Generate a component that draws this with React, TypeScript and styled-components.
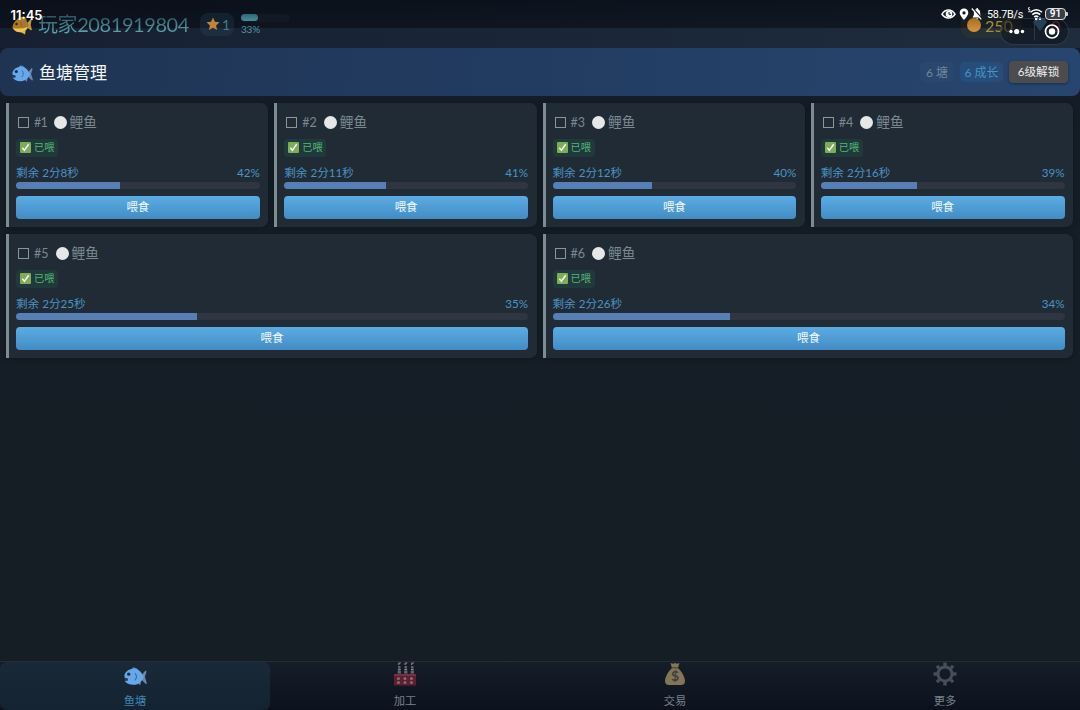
import React from "react";
import styled, { createGlobalStyle } from "styled-components";

const GlobalStyle = createGlobalStyle`
  * { box-sizing: border-box; }
  body {
    margin: 0;
    background: #151d26;
    font-family: Lato, "Noto Sans CJK SC", sans-serif;
    overflow: hidden;
  }
`;

const Screen = styled.div`
  width: 1080px;
  height: 710px;
  display: flex;
  flex-direction: column;
  position: relative;
  overflow: hidden;
  background: linear-gradient(180deg, #141c28 0, #151d26 230px, #151d25 650px);
`;

const TopBar = styled.header`
  height: 48px;
  flex: none;
  display: flex;
  align-items: flex-start;
  padding-left: 12px;
  background: linear-gradient(90deg, #162031 0%, #1e2c3c 100%);
`;

const StatusShade = styled.div`
  position: absolute;
  inset: 0 0 auto 0;
  height: 28px;
  background: linear-gradient(180deg, rgba(5, 8, 15, 0.68), rgba(5, 8, 15, 0.52));
`;

const PlayerRow = styled.div`
  position: relative;
  display: flex;
  align-items: center;
  height: 48px;
`;

const PlayerIcon = styled.div`
  display: flex;
  width: 22px;
  margin: 1px 4px 0 0;
`;

const PlayerName = styled.div`
  width: 152px;
  font-size: 20px;
  line-height: 28px;
  letter-spacing: -0.42px;
  white-space: nowrap;
  background: linear-gradient(180deg, #2b5660 20%, #5fabb5 85%);
  background-clip: text;
  color: transparent;
`;

const LevelPill = styled.div`
  display: flex;
  align-items: center;
  gap: 2px;
  width: 34px;
  height: 23px;
  margin-left: 10px;
  padding-left: 6px;
  border-radius: 8px;
  background: rgba(65, 135, 155, 0.13);
  color: #427d89;
  font-size: 14px;
`;

const Experience = styled.div`
  display: flex;
  flex-direction: column;
  gap: 2px;
  width: 49px;
  height: 23px;
  margin: 2px 0 0 7px;
  color: #5796a1;
  font-size: 10px;
  line-height: 11px;
  letter-spacing: -0.2px;
`;

const ExperienceTrack = styled.div`
  height: 8px;
  border-radius: 4px;
  background: rgba(120, 130, 150, 0.05);
  flex: none;
`;

const ExperienceFill = styled.div`
  width: 17px;
  height: 7px;
  border-radius: 4px;
  background: linear-gradient(180deg, #2c6a76, #468d99);
`;

const Coins = styled.div`
  position: absolute;
  left: 961px;
  top: 13px;
  width: 61px;
  height: 25px;
  display: flex;
  align-items: center;
  gap: 4px;
  padding-left: 6px;
  border-radius: 9px;
  background: rgba(160, 130, 20, 0.07);
  color: #a48e3b;
  font-size: 16px;
  line-height: 18px;
`;

const CoinDot = styled.span`
  width: 14px;
  height: 14px;
  margin-top: -2px;
  border-radius: 50%;
  background: linear-gradient(180deg, #a76e25, #d69638);
`;

const Gem = styled.div`
  position: absolute;
  left: 1033px;
  top: 17px;
  display: flex;
  gap: 4px;
  color: #8c3e48;
  font-size: 16px;
  line-height: 17px;
`;

const Clock = styled.div`
  position: absolute;
  left: 10.5px;
  top: 6.5px;
  color: #fff;
  font: 600 13px/16px Inter, sans-serif;
`;

const SystemIcons = styled.div`
  position: absolute;
  left: 941px;
  top: 6px;
  width: 130px;
  height: 16px;
  display: flex;
  align-items: center;
  color: #fff;
`;

const Speed = styled.span`
  width: 40px;
  margin: 1px 0 0 2px;
  font: 10.8px/16px Roboto, sans-serif;
  letter-spacing: -0.25px;
  white-space: nowrap;
`;

const Battery = styled.span`
  display: flex;
  align-items: center;
  justify-content: center;
  width: 21px;
  height: 12px;
  margin-left: 1px;
  border: 1px solid #ddd;
  border-radius: 4px;
  background: #3a3e46;
  font: 600 10px/10px Roboto, sans-serif;
`;

const BatteryTip = styled.span`
  width: 2px;
  height: 4px;
  background: #ccc;
  border-radius: 0 1px 1px 0;
`;

const Capsule = styled.div`
  position: absolute;
  left: 1000px;
  top: 18px;
  width: 69px;
  height: 27px;
  display: flex;
  align-items: center;
  border: 1px solid rgba(110, 120, 135, 0.3);
  border-radius: 14px;
  background: rgba(12, 18, 27, 0.55);
`;

const PondHeader = styled.section`
  height: 48px;
  flex: none;
  display: flex;
  align-items: center;
  padding: 0 12px;
  border-radius: 8px;
  background: linear-gradient(100deg, #1f3453 0%, #223b60 45%, #27466f 100%);
`;

const PondIcon = styled.span`
  display: flex;
  margin-top: 4px;
`;

const PondTitle = styled.h1`
  flex: 1;
  margin: 1px 0 0 6px;
  color: #f4f6f9;
  font-size: 17px;
  font-weight: 400;
  line-height: 24px;
`;

const HeaderTags = styled.div`
  display: flex;
  gap: 6px;
`;

const Tag = styled.span<{ $width: number; $tone: string; $fill: string }>`
  width: ${(p) => p.$width}px;
  height: 20px;
  display: flex;
  align-items: center;
  justify-content: center;
  border-radius: 5px;
  background: ${(p) => p.$fill};
  color: ${(p) => p.$tone};
  font-size: 12px;
  white-space: nowrap;
`;

const UnlockButton = styled.button`
  width: 59px;
  height: 22px;
  margin: -1px 0 0 0;
  padding: 0;
  border: 0;
  border-radius: 4px;
  background: #4c4c4f;
  box-shadow: 0 1px 3px rgba(0, 0, 0, 0.35);
  color: #eee;
  font: 11.6px/21px Lato, "Noto Sans CJK SC", sans-serif;
  white-space: nowrap;
`;

const PondList = styled.main`
  flex: 1;
  display: flex;
  flex-wrap: wrap;
  align-content: flex-start;
  gap: 7.5px 6px;
  padding: 7px 7px 0 6px;
`;

const Card = styled.article<{ $wide: boolean }>`
  width: ${(p) => (p.$wide ? 530.5 : 262.25)}px;
  height: 123.5px;
  padding: 9px 8.5px 0 7px;
  border-left: 3px solid #7c8c90;
  border-radius: 0 7px 7px 0;
  background: #202b36;
  box-shadow: 0 1px 5px rgba(5, 12, 20, 0.35);
`;

const CardTitle = styled.div`
  display: flex;
  align-items: center;
  height: 20px;
  padding-left: 2px;
  color: #7b8890;
`;

const CheckBox = styled.span`
  width: 11px;
  height: 11px;
  border: 1px solid #8c9599;
`;

const PondNumber = styled.span<{ $narrow: boolean }>`
  width: ${(p) => (p.$narrow ? 13 : 15)}px;
  margin-left: 5px;
  font-size: 12.5px;
  letter-spacing: ${(p) => (p.$narrow ? -0.8 : 0)}px;
  white-space: nowrap;
`;

const FishDot = styled.span`
  width: 13px;
  height: 13px;
  margin: 0 3px 0 6.5px;
  border-radius: 50%;
  background: #e6e7e9;
`;

const FishName = styled.span`
  font-size: 13.7px;
  line-height: 20px;
`;

const FedBadge = styled.div`
  display: flex;
  align-items: center;
  gap: 3px;
  width: 42px;
  height: 18px;
  margin-top: 6.6px;
  padding: 0 0 1px 4px;
  border-radius: 4px;
  background: #20393b;
  color: #55b574;
  font-size: 10.2px;
  line-height: 16px;
  white-space: nowrap;
`;

const TimeRow = styled.div`
  display: flex;
  justify-content: space-between;
  height: 17px;
  margin-top: 7px;
  color: #4c93c3;
  font-size: 11.6px;
  line-height: 17px;
`;

const Track = styled.div`
  height: 7px;
  margin-top: 1.4px;
  border-radius: 4px;
  background: #2f3541;
  overflow: hidden;
`;

const Fill = styled.div`
  height: 100%;
  background: #557fb5;
`;

const FeedButton = styled.button`
  display: block;
  width: 100%;
  height: 23.5px;
  margin-top: 6.6px;
  padding: 0;
  border: 0;
  border-radius: 4px;
  background: linear-gradient(180deg, #5bace3, #438cc4);
  color: #f3f9fe;
  font: 11.5px/22px Lato, "Noto Sans CJK SC", sans-serif;
`;

const TabBar = styled.nav`
  height: 49.5px;
  flex: none;
  display: flex;
  border-top: 1px solid #232d39;
  background: linear-gradient(180deg, #151d29, #0c121d);
`;

const Tab = styled.div<{ $active?: boolean }>`
  flex: 1;
  display: flex;
  flex-direction: column;
  align-items: center;
  gap: 5px;
  border-radius: 7px;
  background: ${(p) => (p.$active ? "linear-gradient(180deg, #1a2938, #142331)" : "none")};
  color: ${(p) => (p.$active ? "#3f86b3" : "#77828a")};
  font-size: 11.3px;
  line-height: 19px;
`;

const TabIcon = styled.span<{ $drop?: number }>`
  display: flex;
  align-items: center;
  justify-content: center;
  height: 25px;
  padding-top: ${(p) => p.$drop ?? 0}px;
`;

const BlueFish = ({ width = 21 }: { width?: number }) => (
  <svg width={width} height={width * 0.82} viewBox="0 0 22 18">
    <path d="M6 4 8.500 .5q4-.5 6 4Z" fill="#5288c8" />
    <path d="M12 14.500 15.500 17.500 16.500 13Z" fill="#5288c8" />
    <path d="m16.500 8 3.800-4.500q1.300-.2 1.200 1L20 9.500l1.900 6q-.3 1-1.300.5L16.500 12Z" fill="#6788ad" />
    <path d="M.4 8C1.500 3.800 5.500 1.500 9.800 1.700c4.500.2 7.200 3.800 9.200 7.800-1.800 4.200-4.700 7.300-9.700 7.500C5.500 17.100 2 15.600.6 13.200l3-.2-.4-1.600-2.500-.9Z" fill="#67a9e8" />
    <path d="M10.500 5.800c1.900 2.200 1.600 5-.2 7" fill="none" stroke="#326ca9" strokeWidth="1" />
    <circle cx="4.500" cy="6.800" r="1.600" fill="#182d48" />
    <path d="m.7 10.300 3 .7.1 1.800-3 .2" fill="#263e60" />
  </svg>
);

const GoldFish = () => (
  <svg width="22" height="20" viewBox="0 0 22 20">
    <path d="M5 5Q7 1 13 2L15 6Z" fill="#a77b2a" />
    <path d="m7 16 6 3.500.7-4Z" fill="#e3b449" />
    <path d="m14.500 9 3.700-4.500q1.500-.3 1.300 1l-.8 4.500 1.200 4.500q-.2 1.200-1.500.5L14.500 12Z" fill="#c89435" />
    <path d="M.7 11C2 6 5.500 3.400 10 3.800c3.500.3 6 3.200 6.600 6.500-.8 4.200-4 7-8.300 7-3.200 0-5.600-1.300-7-3.600l-1-.6Z" fill="#a97929" />
    <path d="M1 13q7.500 1.500 15-1c-2 5.500-10.500 7.500-14.500 2Z" fill="#f0c356" />
    <path d="M8.500 7q2 2 .6 4.500" fill="none" stroke="#835c25" strokeWidth=".8" />
    <circle cx="4.500" cy="9" r="1.200" fill="#302416" />
  </svg>
);

const CheckMark = () => (
  <svg width="11" height="11" viewBox="0 0 11 11">
    <rect width="11" height="11" rx="1" fill="#7fac59" />
    <path d="m2.300 5.800 2.100 2.400 4.300-6" fill="none" stroke="#f5faf1" strokeWidth="1.500" />
  </svg>
);

const Factory = () => (
  <svg width="22" height="24" viewBox="0 0 22 24">
    {[0, 1, 2].map((i) => (
      <g key={i} transform={`translate(${4 + i * 6.5} 0)`}>
        <path d="M-.5 12 .3 4h2l.8 8Z" fill="#42474f" />
        <path d="M.2 5h2.200M0 7.500h2.600M-.2 10h3" stroke="#838990" />
        <path d="M.7 3V1.500L2.700.7" fill="none" stroke="#74787e" strokeWidth="1.400" />
      </g>
    ))}
    <rect x="0" y="12" width="22" height="11.500" rx="1" fill="#611f2e" />
    <path d="M0 13h22" stroke="#874653" />
    {[3.2, 9.7, 16.2].map((x) => (
      <g key={x} fill="#818087">
        <rect x={x} y="15.500" width="2.500" height="2.200" />
        <rect x={x} y="19.500" width="2.500" height="2.200" />
      </g>
    ))}
  </svg>
);

const MoneyBag = () => (
  <svg width="22" height="24" viewBox="0 0 22 24">
    <path d="M6.500 1 9 1.800l2-.8 2 .8 2.500-.8-1.600 5.200C17 8 21 15 21 19q0 4-4 4H5q-4 0-4-4C1 15 5 8 8 6.200Z" fill="#817756" />
    <path d="M7.500 5.800h7" stroke="#53472f" strokeWidth="1.300" />
    <text x="11" y="19.200" textAnchor="middle" fontFamily="Lato" fontSize="14" fontWeight="700" fill="#3a4044">$</text>
  </svg>
);

const Gear = () => (
  <svg width="24" height="24" viewBox="0 0 24 24" fill="none" stroke="#454e59">
    <circle cx="12" cy="12" r="7" strokeWidth="3" />
    {[0, 45, 90, 135, 180, 225, 270, 315].map((angle) => (
      <path key={angle} d="M12 .5V4" strokeWidth="3.400" transform={`rotate(${angle} 12 12)`} />
    ))}
  </svg>
);

const StatusGlyphs = () => (
  <svg width="44" height="16" viewBox="0 0 44 16">
    <path d="M1 8.200c3.500-5.500 9.500-5.500 13 0-3.500 5-9.500 5-13 0Z" fill="none" stroke="#fff" strokeWidth="1.500" />
    <circle cx="8" cy="8" r="3.300" fill="#fff" />
    <path d="M8 6v2.300h2" fill="none" stroke="#111722" />
    <path d="M23 2.500c-2.600 0-4.300 1.800-4.300 4.200 0 2.900 4.300 7.200 4.300 7.200s4.300-4.300 4.300-7.200c0-2.400-1.700-4.200-4.300-4.200Zm0 2.800a1.600 1.600 0 1 1 0 3.200 1.600 1.600 0 0 1 0-3.200Z" fill="#fff" />
    <path d="M31.500 11.500h9L39.200 9V6.500c0-2-1.200-3-2.200-3.300V2h-1.500v1c-1.700.5-2.600 2-2.600 3.500V9ZM35 12.300h2.500l-1.200 1Z" fill="#fff" />
    <path d="m32 2.500 9.500 10.500" stroke="#10151e" strokeWidth="1.300" />
    <path d="m30.800 2.500 9.500 10.800" stroke="#fff" strokeWidth="1.200" />
  </svg>
);

const Wifi = () => (
  <svg width="17" height="14" viewBox="0 0 17 14" fill="none" stroke="#fff" strokeWidth="1.500">
    <path d="M3.500 5.300c3.500-3 8-3 11.500 0M5.300 7.600c2.300-2 5.600-2 7.900 0M7.200 10q2-1.700 4.100 0" />
    <circle cx="9.200" cy="12" r=".5" fill="#fff" />
    <path d="M3 .7H1.500v2h1.400v2H1M13 10v3m-1-1 1 1 1-1" strokeWidth=".8" />
  </svg>
);

const ponds = [
  { id: 1, time: "2分8秒", percent: 42, progress: 42.7 },
  { id: 2, time: "2分11秒", percent: 41, progress: 41.7 },
  { id: 3, time: "2分12秒", percent: 40, progress: 40.9 },
  { id: 4, time: "2分16秒", percent: 39, progress: 39.4 },
  { id: 5, time: "2分25秒", percent: 35, progress: 35.3 },
  { id: 6, time: "2分26秒", percent: 34, progress: 34.7 },
];

const PondCard = ({ pond }: { pond: (typeof ponds)[number] }) => (
  <Card $wide={pond.id > 4}>
    <CardTitle>
      <CheckBox />
      <PondNumber $narrow={pond.id === 1}>#{pond.id}</PondNumber>
      <FishDot />
      <FishName>鲤鱼</FishName>
    </CardTitle>
    <FedBadge><CheckMark />已喂</FedBadge>
    <TimeRow><span>剩余 {pond.time}</span><span>{pond.percent}%</span></TimeRow>
    <Track><Fill style={{ width: `${pond.progress}%` }} /></Track>
    <FeedButton>喂食</FeedButton>
  </Card>
);

export default function App() {
  return (
    <Screen>
      <GlobalStyle />
      <TopBar>
        <StatusShade />
        <PlayerRow>
          <PlayerIcon><GoldFish /></PlayerIcon>
          <PlayerName>玩家2081919804</PlayerName>
          <LevelPill>
            <svg width="14" height="14" viewBox="0 0 14 14">
              <path d="m7 .5 1.900 4.300 4.600.5-3.400 3.100 1 4.600L7 10.700 2.900 13l1-4.600L.5 5.300l4.600-.5Z" fill="#c38437" />
            </svg>
            1
          </LevelPill>
          <Experience>
            <ExperienceTrack><ExperienceFill /></ExperienceTrack>
            33%
          </Experience>
        </PlayerRow>
        <Coins><CoinDot />250</Coins>
        <Gem>
          <svg width="14" height="14" viewBox="0 0 14 14"><path d="M3 1h8l3 4-7 9-7-9Z" fill="#447ba3" /></svg>
          0
        </Gem>
        <Capsule>
          <svg width="67" height="25" viewBox="0 0 67 25">
            <g fill="#fff">
              <circle cx="10" cy="12.500" r="1.700" />
              <circle cx="15.700" cy="12.500" r="2.600" />
              <circle cx="21.500" cy="12.500" r="1.700" />
              <circle cx="51" cy="12.500" r="3.200" />
            </g>
            <circle cx="51" cy="12.500" r="6.500" fill="none" stroke="#fff" strokeWidth="1.700" />
            <path d="M33.500 3.500v18" stroke="#303843" />
          </svg>
        </Capsule>
        <Clock>11:45</Clock>
        <SystemIcons>
          <StatusGlyphs />
          <Speed>58.7B/s</Speed>
          <Wifi />
          <Battery>91</Battery>
          <BatteryTip />
        </SystemIcons>
      </TopBar>
      <PondHeader>
        <PondIcon><BlueFish /></PondIcon>
        <PondTitle>鱼塘管理</PondTitle>
        <HeaderTags>
          <Tag $width={34} $tone="#71869d" $fill="rgba(65, 95, 125, 0.15)">6 塘</Tag>
          <Tag $width={43} $tone="#4792c8" $fill="rgba(43, 105, 165, 0.25)">6 成长</Tag>
          <UnlockButton>6级解锁</UnlockButton>
        </HeaderTags>
      </PondHeader>
      <PondList>
        {ponds.map((pond) => <PondCard key={pond.id} pond={pond} />)}
      </PondList>
      <TabBar>
        <Tab $active><TabIcon $drop={5}><BlueFish width={23} /></TabIcon>鱼塘</Tab>
        <Tab><TabIcon><Factory /></TabIcon>加工</Tab>
        <Tab><TabIcon><MoneyBag /></TabIcon>交易</Tab>
        <Tab><TabIcon><Gear /></TabIcon>更多</Tab>
      </TabBar>
    </Screen>
  );
}
